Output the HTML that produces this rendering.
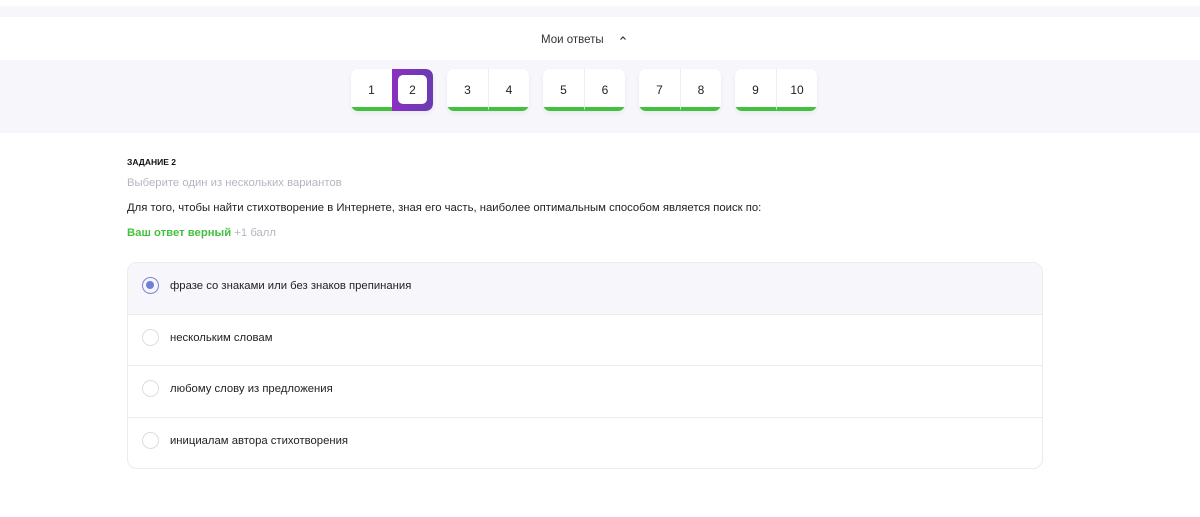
<!DOCTYPE html>
<html><head><meta charset="utf-8"><style>
*{box-sizing:border-box;margin:0;padding:0}
body{width:1200px;height:517px;background:#fff;font-family:"Liberation Sans",sans-serif;position:relative;overflow:hidden}
.strip{position:absolute;left:0;top:6px;width:1200px;height:11px;background:#f6f6fb}
.title{position:absolute;top:34px;left:541px;font-size:11.5px;color:#333;}
.chev{position:absolute;left:619px;top:35px}
.nav{position:absolute;top:60px;left:0;width:1200px;height:73px;background:#f6f6fb}
.g{position:absolute;top:9px;width:82px;height:42px;background:#fff;border-radius:7px;box-shadow:0 2px 4px rgba(0,0,0,.06);overflow:hidden}
.c{position:absolute;top:0;width:41px;height:42px;text-align:center;line-height:43px;font-size:12px;color:#222;border-bottom:4px solid #44c040}
.c.l{left:0}.c.r{left:41px;border-left:1px solid #eee}
.sel{position:absolute;left:41px;top:0;width:41px;height:42px;background:linear-gradient(90deg,#8a2fc2,#6a3cb0);border-radius:0 7px 7px 0}
.sel div{position:absolute;left:6px;top:6px;width:29px;height:29px;background:#fff;border-radius:5px;text-align:center;line-height:31px;font-size:12px;color:#222}
.t{position:absolute;left:127px;font-size:11.3px}
.card{position:absolute;left:127px;top:262px;width:916px;height:207px;border:1px solid #ebebf0;border-radius:10px;overflow:hidden}
.row{height:51.5px;border-bottom:1px solid #ebebf0;position:relative;font-size:11.3px;color:#222;line-height:46px;padding-left:42px}
.row:last-child{border-bottom:none}
.rad{position:absolute;left:14px;top:14px;width:17px;height:17px;border:1.5px solid #ddd;border-radius:50%}
.rad.on{border-color:#7a86d8}
.rad.on:after{content:"";position:absolute;left:3px;top:3px;width:8px;height:8px;border-radius:50%;background:#6f7fd8}
</style></head><body>
<div class="strip"></div>
<div class="title">Мои ответы</div>
<svg class="chev" width="8" height="6" viewBox="0 0 8 6"><path d="M1.5 4.5L4 2L6.5 4.5" fill="none" stroke="#333" stroke-width="1.2"/></svg>
<div class="nav">
<div class="g" style="left:351px"><div class="c l">1</div><div class="sel"><div>2</div></div></div>
<div class="g" style="left:447px"><div class="c l">3</div><div class="c r">4</div></div>
<div class="g" style="left:543px"><div class="c l">5</div><div class="c r">6</div></div>
<div class="g" style="left:639px"><div class="c l">7</div><div class="c r">8</div></div>
<div class="g" style="left:735px"><div class="c l">9</div><div class="c r">10</div></div>
</div>
<div class="t" style="top:157px;font-size:8.5px;font-weight:bold;color:#111">ЗАДАНИЕ 2</div>
<div class="t" style="top:177px;color:#b5b5c0">Выберите один из нескольких вариантов</div>
<div class="t" style="top:202px;color:#222">Для того, чтобы найти стихотворение в Интернете, зная его часть, наиболее оптимальным способом является поиск по:</div>
<div class="t" style="top:227px;color:#44c040;font-weight:bold">Ваш ответ верный <span style="color:#b5b5c0;font-weight:normal">+1 балл</span></div>
<div class="card">
<div class="row" style="background:#f6f6fb"><div class="rad on"></div>фразе со знаками или без знаков препинания</div>
<div class="row"><div class="rad"></div>нескольким словам</div>
<div class="row"><div class="rad"></div>любому слову из предложения</div>
<div class="row"><div class="rad"></div>инициалам автора стихотворения</div>
</div>
</body></html>
